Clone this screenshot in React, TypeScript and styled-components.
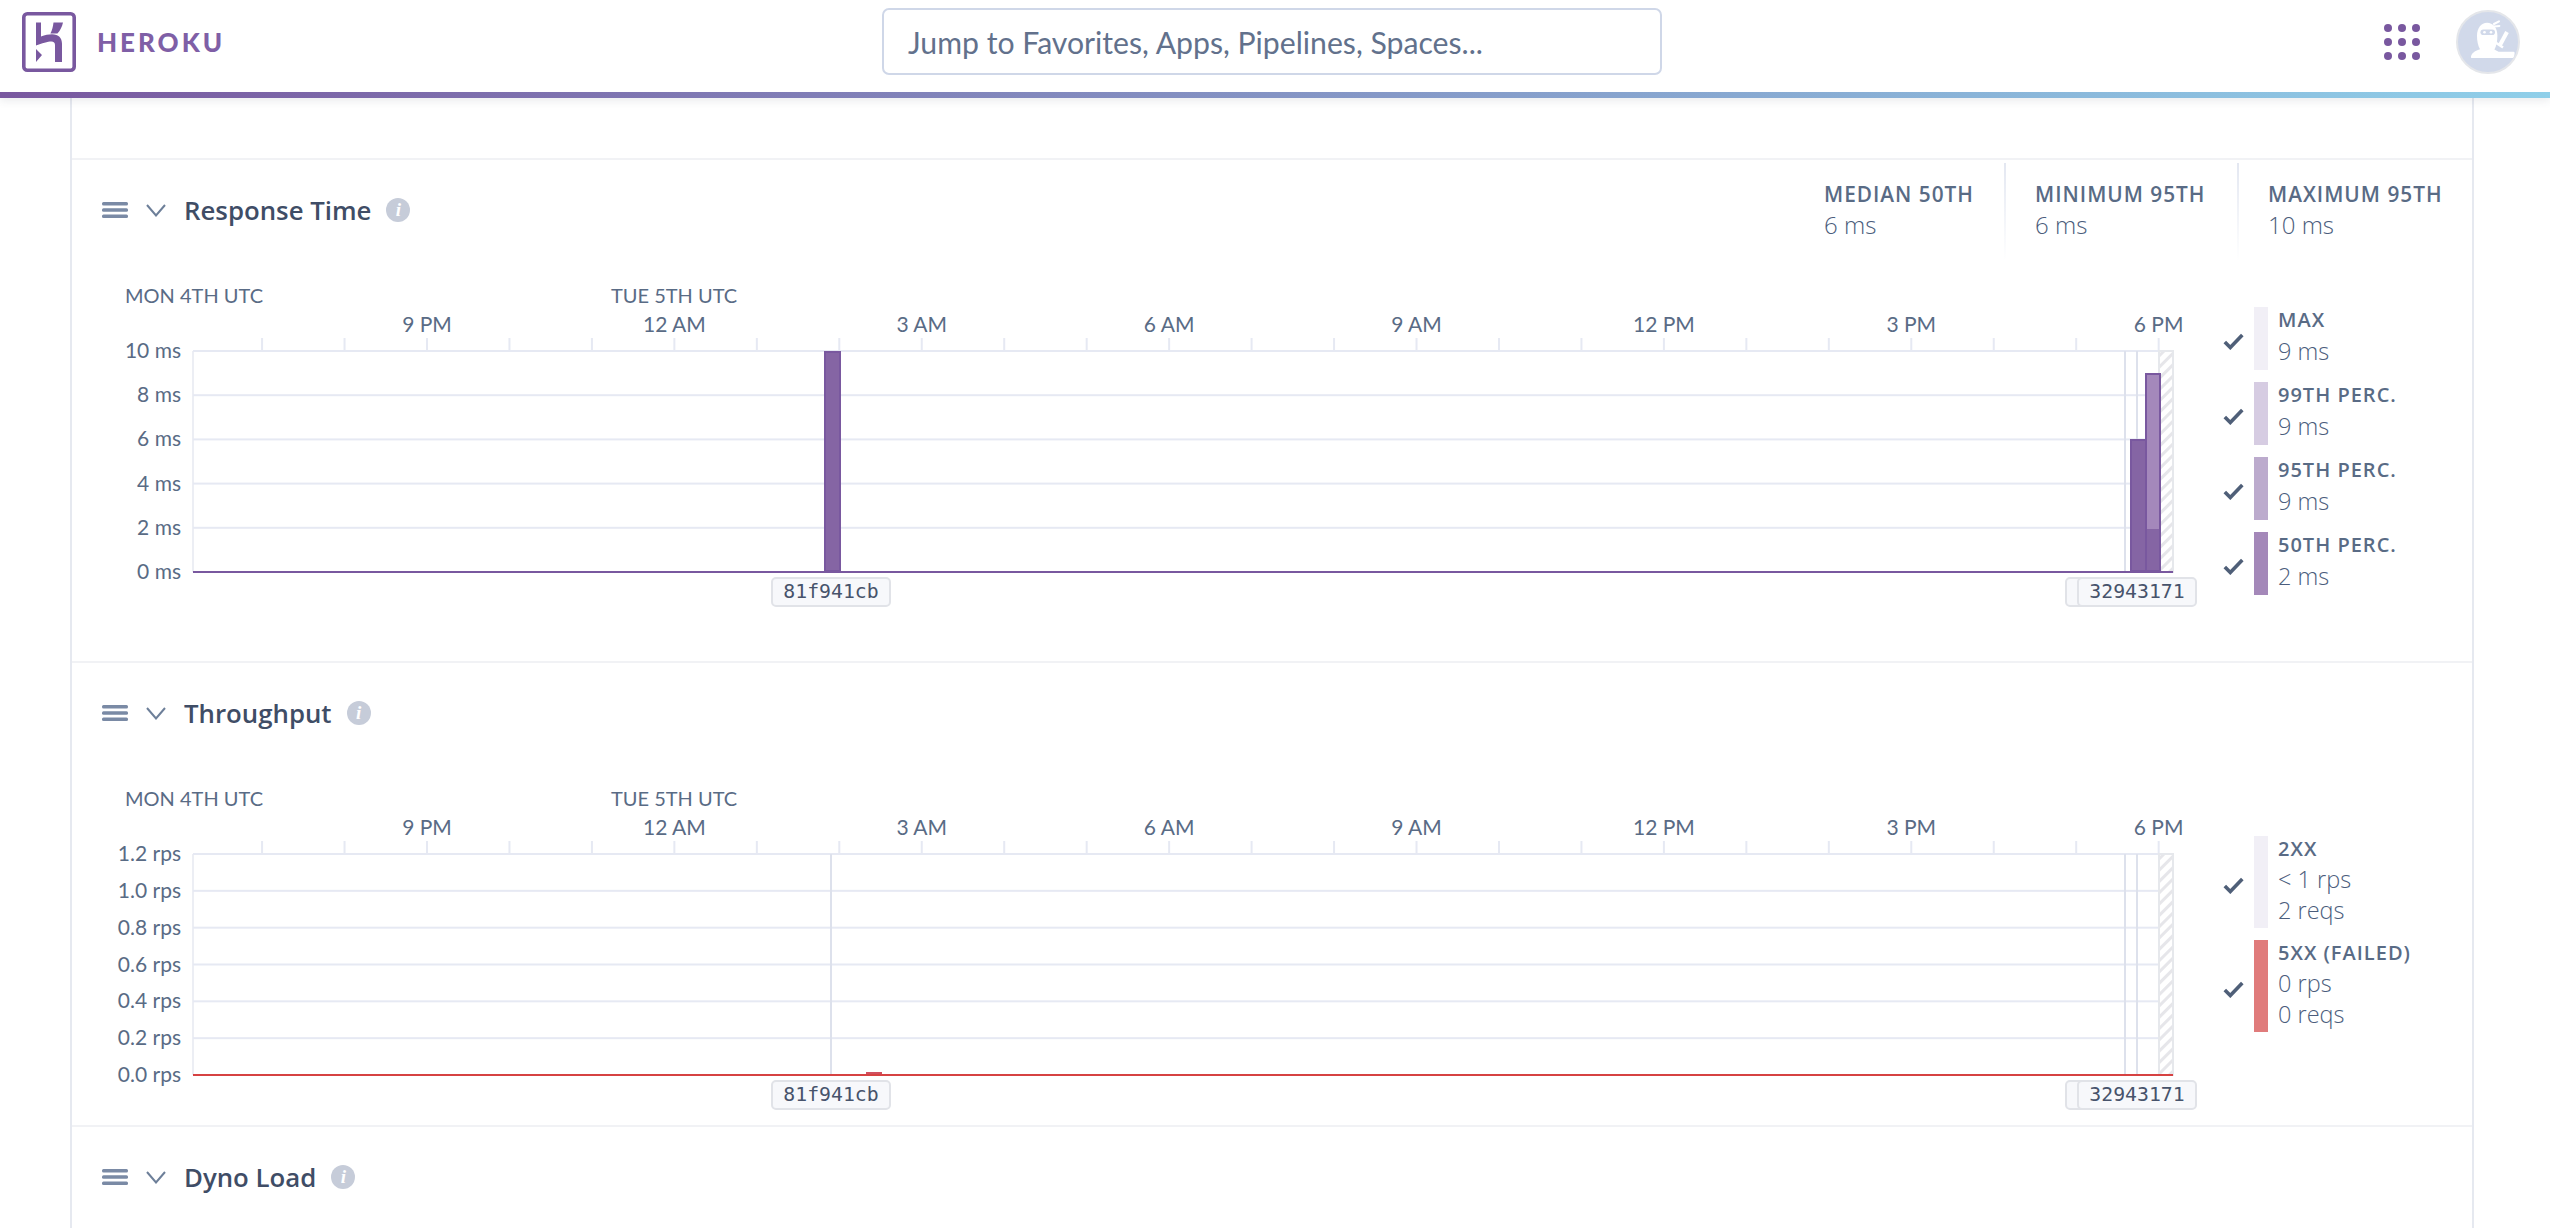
import styled, { createGlobalStyle } from "styled-components";

const GlobalStyle = createGlobalStyle`
  html, body {
    margin: 0;
    height: 100%;
    background: #fff;
    overflow: hidden;
  }
  body {
    font-family: Lato, "Open Sans", sans-serif;
    color: #3f4d66;
  }
`;

const Page = styled.div`
  display: flex;
  flex-direction: column;
  height: 100vh;
  overflow: hidden;
`;

const TopBar = styled.header`
  position: relative;
  z-index: 2;
  flex: none;
  display: grid;
  grid-template-columns: 882px 780px 1fr;
  align-items: center;
  height: 83px;
  padding-bottom: 9px;
  background: #fff;
  border-bottom: 6px solid transparent;
  border-image: linear-gradient(to right, #79589f, #8fcfe9) 1;
  box-shadow: 0 3px 8px rgba(60, 70, 90, 0.1);
`;

const Brand = styled.div`
  display: flex;
  align-items: center;
  gap: 21px;
  padding-left: 22px;
`;

const BrandName = styled.span`
  font-size: 26px;
  font-weight: 900;
  letter-spacing: 3px;
  color: #7f5fa6;
`;

const SearchBox = styled.div`
  display: flex;
  align-items: center;
  height: 67px;
  box-sizing: border-box;
  padding-left: 24px;
  border: 2px solid #cfd7e8;
  border-radius: 7px;
  font-size: 30.2px;
  color: #62718c;
`;

const TopActions = styled.div`
  display: flex;
  justify-content: flex-end;
  align-items: center;
  gap: 36px;
  padding-right: 30px;
`;

const AppGrid = styled.div`
  display: grid;
  grid-template-columns: repeat(3, 8px);
  gap: 6px;
`;

const AppDot = styled.span`
  width: 8px;
  height: 8px;
  border-radius: 50%;
  background: #79589f;
`;

const Frame = styled.main`
  flex: 1;
  margin: 0 76px 0 70px;
  padding-top: 60px;
  border-left: 2px solid #e6e9f0;
  border-right: 2px solid #e6e9f0;
`;

const Section = styled.section<{ $paddingBottom: number }>`
  border-top: 2px solid #f1f2f5;
  padding-bottom: ${(p) => p.$paddingBottom}px;
`;

const SectionHeader = styled.div`
  display: flex;
  align-items: center;
  height: 100px;
  padding-left: 30px;
`;

const TitleGroup = styled.div`
  flex: 1;
  display: flex;
  align-items: center;
`;

const Title = styled.h2`
  margin: 0 15px 0 18px;
  font-family: "Open Sans", sans-serif;
  font-size: 25.8px;
  font-weight: 600;
  color: #3f4d66;
`;

const InfoIcon = styled.span`
  display: flex;
  align-items: center;
  justify-content: center;
  width: 24px;
  height: 24px;
  border-radius: 50%;
  background: #c6ccd9;
  color: #fff;
  font-family: "Liberation Serif", serif;
  font-style: italic;
  font-weight: 700;
  font-size: 19px;
`;

const Stats = styled.div`
  display: grid;
  grid-template-columns: 211px 233px 234px;
  align-self: stretch;
  padding: 3px 1px 0 0;
`;

const Stat = styled.div<{ $divided?: boolean }>`
  display: flex;
  flex-direction: column;
  justify-content: center;
  padding: 0 0 3px 29px;
  border-left: 2px solid transparent;
  border-image: ${(p) =>
    p.$divided ? "linear-gradient(to bottom, #e3e7f1, #ffffff) 1" : "none"};
`;

const StatLabel = styled.div`
  font-family: "Open Sans", sans-serif;
  font-size: 20.8px;
  font-weight: 600;
  letter-spacing: 1px;
  line-height: 30px;
  color: #596b85;
  white-space: nowrap;
`;

const StatValue = styled.div`
  font-family: "Open Sans", sans-serif;
  font-size: 24px;
  font-weight: 300;
  line-height: 32px;
  color: #4b5d7c;
`;

const ChartRow = styled.div`
  display: flex;
  margin-top: 20px;
`;

const ChartArea = styled.div`
  position: relative;
  flex: none;
  width: 2150px;
  height: 327px;
`;

const ChartCanvas = styled.svg`
  display: block;
`;

const AxisText = styled.text`
  font-family: Lato, "Open Sans", sans-serif;
  font-size: 21px;
  fill: #596b85;
`;

const DayText = styled(AxisText)`
  font-size: 20px;
`;

const CommitTag = styled.div<{ $left: number }>`
  position: absolute;
  top: 297px;
  left: ${(p) => p.$left}px;
  box-sizing: border-box;
  width: 120px;
  height: 30px;
  line-height: 26px;
  text-align: center;
  background: #f7f8fb;
  border: 2px solid #e1e3e8;
  border-radius: 5px;
  font-family: "DejaVu Sans Mono", monospace;
  font-size: 19.8px;
  color: #47536b;
`;

const Legend = styled.ul<{ $top: number }>`
  list-style: none;
  margin: ${(p) => p.$top}px 0 0;
  padding: 0;
  display: flex;
  flex-direction: column;
  gap: 12px;
`;

const LegendItem = styled.li`
  display: flex;
  align-items: stretch;
`;

const LegendCheck = styled.span`
  display: flex;
  align-items: center;
  box-sizing: border-box;
  width: 32px;
  padding: 6px 0 0 1px;
`;

const Swatch = styled.span<{ $color: string }>`
  flex: none;
  width: 14px;
  background: ${(p) => p.$color};
`;

const LegendText = styled.div`
  margin: -2px 0 2px;
  padding-left: 10px;
`;

const LegendLabel = styled.div`
  font-family: "Open Sans", sans-serif;
  font-size: 20px;
  font-weight: 600;
  letter-spacing: 1px;
  line-height: 30px;
  color: #596b85;
  white-space: nowrap;
`;

const LegendValue = styled.div<{ $line: number }>`
  font-family: "Open Sans", sans-serif;
  font-size: 23.5px;
  font-weight: 300;
  line-height: ${(p) => p.$line}px;
  color: #4b5d7c;
  white-space: nowrap;
`;

const HerokuLogo = () => (
  <svg width="54" height="60" viewBox="0 0 54 60" aria-hidden="true">
    <rect x="1.8" y="1.8" width="50.4" height="56.4" rx="3.5" fill="none" stroke="#79589f" strokeWidth="3.6" />
    <path
      d="M14 10.5h5v14c4-1.3 7.6-2.2 11-2.2 6.6 0 10 3.6 10 9.5v18.2h-7V33c0-2.4-1.2-3.6-3.6-3.6-3.6 0-9.6 1.6-15.4 4.2z"
      fill="#79589f"
    />
    <path d="M31.5 10.5h9.5c-1 4.4-2.8 8-5.6 11h-7c1.8-3.4 2.6-7 3.1-11zM14 37l6 6-6 7z" fill="#79589f" />
  </svg>
);

const NinjaAvatar = () => (
  <svg width="64" height="64" viewBox="0 0 64 64" aria-hidden="true">
    <circle cx="32" cy="32" r="31" fill="#d1d9ea" stroke="#e4e6ea" strokeWidth="2" />
    <path
      d="M16 48c-.8 0-1.2-.6-1-1.600.8-3.400 3-5 9-7.200-2-3.400-3-8-3-13.200 0-8 4.400-13.200 10-13.200 6 0 10.400 5 10.400 12.600 0 5.400-1 10.600-3 14 1.600.8 3 1.600 4.200 2.400h15c.8 0 1.200.8 1 1.600-.2 2.400-1 4.600-2 4.600z"
      fill="#fff"
    />
    <path d="M38 14l5-2.600M38 16.500l5.400-.6" stroke="#fff" strokeWidth="2" strokeLinecap="round" />
    <rect x="24.5" y="19.500" width="14.500" height="5.600" rx="2.800" fill="#d1d9ea" />
    <circle cx="28.500" cy="22.300" r="1.300" fill="#fff" />
    <circle cx="35" cy="22.300" r="1.300" fill="#fff" />
    <path d="M51 22L44 35" stroke="#fff" strokeWidth="4" />
    <path d="M39.500 32.500l7.500 5" stroke="#fff" strokeWidth="2.500" />
  </svg>
);

const MenuIcon = () => (
  <svg width="26" height="16" viewBox="0 0 26 16" aria-hidden="true">
    <rect y="0" width="26" height="3.400" rx="1.500" fill="#7a8aa5" />
    <rect y="6.300" width="26" height="3.400" rx="1.500" fill="#7a8aa5" />
    <rect y="12.600" width="26" height="3.400" rx="1.500" fill="#7a8aa5" />
  </svg>
);

const ChevronIcon = () => (
  <svg width="20" height="13" viewBox="0 0 20 13" style={{ marginLeft: 18 }} aria-hidden="true">
    <path d="M1 1l9 10.500L19 1" fill="none" stroke="#6d7f99" strokeWidth="2" />
  </svg>
);

const CheckIcon = () => (
  <svg width="21" height="17" viewBox="0 0 21 17" aria-hidden="true">
    <path d="M1.800 9l5.500 5.500L19.300 2" fill="none" stroke="#4f5f78" strokeWidth="3.600" />
  </svg>
);

// chart coordinates: x is relative to the frame's inner edge, y to the chart's top
const PLOT_LEFT = 121;
const PLOT_RIGHT = 2101;
const PLOT_TOP = 71;
const PLOT_BOTTOM = 292;
const HOUR_X = (k: number) => 355 + k * 82.46;

const hourTicks = Array.from({ length: 24 }, (_, i) => i - 2);
const hourLabels = [
  { label: "9 PM", k: 0 },
  { label: "12 AM", k: 3 },
  { label: "3 AM", k: 6 },
  { label: "6 AM", k: 9 },
  { label: "9 AM", k: 12 },
  { label: "12 PM", k: 15 },
  { label: "3 PM", k: 18 },
  { label: "6 PM", k: 21 },
];

interface ChartProps {
  id: string;
  yLabels: string[];
  baseline: string;
  children?: React.ReactNode;
}

const Chart = ({ id, yLabels, baseline, children }: ChartProps) => {
  const step = (PLOT_BOTTOM - PLOT_TOP) / (yLabels.length - 1);
  return (
    <ChartArea>
      <ChartCanvas width="2150" height="327">
        <defs>
          <pattern id={id} width="8" height="8" patternUnits="userSpaceOnUse" patternTransform="rotate(-45)">
            <rect width="8" height="8" fill="#fff" />
            <rect width="8" height="3" fill="#e6e6ea" />
          </pattern>
        </defs>
        <DayText x="53" y="23">MON 4TH UTC</DayText>
        <DayText x="539" y="23">TUE 5TH UTC</DayText>
        {hourLabels.map((h) => (
          <AxisText key={h.label} x={HOUR_X(h.k)} y="52" textAnchor="middle">
            {h.label}
          </AxisText>
        ))}
        {hourTicks.map((k) => (
          <rect key={k} x={HOUR_X(k) - 1} y={PLOT_TOP - 13} width="2" height="13" fill="#e6e9f3" />
        ))}
        <rect x={PLOT_LEFT - 1} y={PLOT_TOP} width="2" height={PLOT_BOTTOM - PLOT_TOP} fill="#eceef4" />
        {yLabels.map((label, i) => (
          <g key={label}>
            <rect x={PLOT_LEFT} y={PLOT_TOP + i * step - 1} width={PLOT_RIGHT - PLOT_LEFT} height="2" fill="#e6e9f3" />
            <AxisText x="109" y={PLOT_TOP + i * step + 7} textAnchor="end">
              {label}
            </AxisText>
          </g>
        ))}
        {[759, 2053, 2065].map((x) => (
          <rect key={x} x={x - 1} y={PLOT_TOP} width="2" height={PLOT_BOTTOM - PLOT_TOP} fill="#dde1ec" />
        ))}
        <rect x="2087" y={PLOT_TOP} width="14" height={PLOT_BOTTOM - PLOT_TOP} fill={`url(#${id})`} stroke="#e6e8ec" strokeWidth="2" />
        {children}
        <rect x={PLOT_LEFT} y={PLOT_BOTTOM - 1} width={PLOT_RIGHT - PLOT_LEFT} height="2" fill={baseline} />
      </ChartCanvas>
      <CommitTag $left={1993}>&nbsp;</CommitTag>
      <CommitTag $left={699}>81f941cb</CommitTag>
      <CommitTag $left={2005}>32943171</CommitTag>
    </ChartArea>
  );
};

const ResponseBars = () => (
  <g stroke="#79589f" strokeWidth="2">
    <rect x="753" y="72" width="15" height="219" fill="#8565a4" />
    <rect x="2059" y="160" width="29" height="131" fill="#8565a4" />
    <rect x="2074" y="94" width="14" height="197" fill="#8565a4" />
    <rect x="2075" y="95" width="12" height="154" fill="#a488bb" stroke="none" />
  </g>
);

const ThroughputBars = () => <rect x="794" y={PLOT_BOTTOM - 3} width="16" height="3" fill="#d0505f" />;

interface SeriesProps {
  label: string;
  values: string[];
  color: string;
}

const LegendList = ({ items, top, line }: { items: SeriesProps[]; top: number; line: number }) => (
  <Legend $top={top}>
    {items.map((item) => (
      <LegendItem key={item.label}>
        <LegendCheck>
          <CheckIcon />
        </LegendCheck>
        <Swatch $color={item.color} />
        <LegendText>
          <LegendLabel>{item.label}</LegendLabel>
          {item.values.map((v) => (
            <LegendValue key={v} $line={line}>
              {v}
            </LegendValue>
          ))}
        </LegendText>
      </LegendItem>
    ))}
  </Legend>
);

const SectionTitle = ({ children }: { children: React.ReactNode }) => (
  <TitleGroup>
    <MenuIcon />
    <ChevronIcon />
    <Title>{children}</Title>
    <InfoIcon>i</InfoIcon>
  </TitleGroup>
);

const responseSeries: SeriesProps[] = [
  { label: "MAX", values: ["9 ms"], color: "#f1eff6" },
  { label: "99TH PERC.", values: ["9 ms"], color: "#d6cce2" },
  { label: "95TH PERC.", values: ["9 ms"], color: "#bcabcd" },
  { label: "50TH PERC.", values: ["2 ms"], color: "#a488b9" },
];

const throughputSeries: SeriesProps[] = [
  { label: "2XX", values: ["< 1 rps", "2 reqs"], color: "#f1eff6" },
  { label: "5XX (FAILED)", values: ["0 rps", "0 reqs"], color: "#e07b7b" },
];

export default function App() {
  return (
    <Page>
      <GlobalStyle />
      <TopBar>
        <Brand>
          <HerokuLogo />
          <BrandName>HEROKU</BrandName>
        </Brand>
        <SearchBox>Jump to Favorites, Apps, Pipelines, Spaces...</SearchBox>
        <TopActions>
          <AppGrid>
            {Array.from({ length: 9 }, (_, i) => (
              <AppDot key={i} />
            ))}
          </AppGrid>
          <NinjaAvatar />
        </TopActions>
      </TopBar>
      <Frame>
        <Section $paddingBottom={54}>
          <SectionHeader>
            <SectionTitle>Response Time</SectionTitle>
            <Stats>
              <Stat>
                <StatLabel>MEDIAN 50TH</StatLabel>
                <StatValue>6 ms</StatValue>
              </Stat>
              <Stat $divided>
                <StatLabel>MINIMUM 95TH</StatLabel>
                <StatValue>6 ms</StatValue>
              </Stat>
              <Stat $divided>
                <StatLabel>MAXIMUM 95TH</StatLabel>
                <StatValue>10 ms</StatValue>
              </Stat>
            </Stats>
          </SectionHeader>
          <ChartRow>
            <Chart id="hatch-response" yLabels={["10 ms", "8 ms", "6 ms", "4 ms", "2 ms", "0 ms"]} baseline="#79589f">
              <ResponseBars />
            </Chart>
            <LegendList items={responseSeries} top={27} line={33} />
          </ChartRow>
        </Section>
        <Section $paddingBottom={15}>
          <SectionHeader>
            <SectionTitle>Throughput</SectionTitle>
          </SectionHeader>
          <ChartRow>
            <Chart
              id="hatch-throughput"
              yLabels={["1.2 rps", "1.0 rps", "0.8 rps", "0.6 rps", "0.4 rps", "0.2 rps", "0.0 rps"]}
              baseline="#d64242"
            >
              <ThroughputBars />
            </Chart>
            <LegendList items={throughputSeries} top={53} line={31} />
          </ChartRow>
        </Section>
        <Section $paddingBottom={0}>
          <SectionHeader>
            <SectionTitle>Dyno Load</SectionTitle>
          </SectionHeader>
        </Section>
      </Frame>
    </Page>
  );
}
